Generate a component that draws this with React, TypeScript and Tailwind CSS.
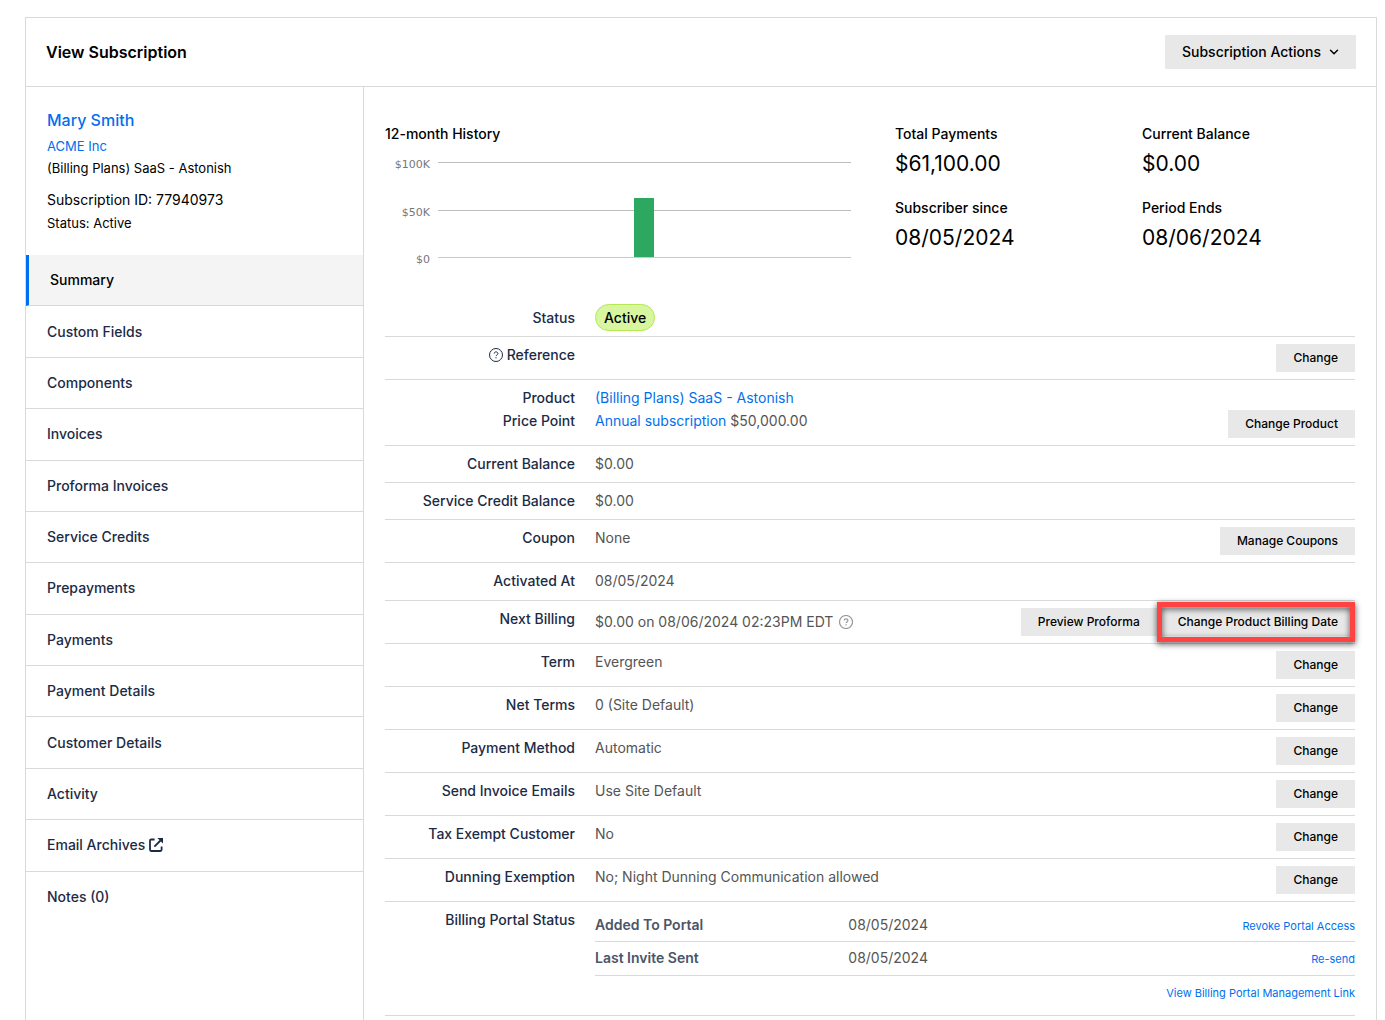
import type { ReactNode } from 'react'
import { ChevronDown } from 'lucide-react'

const navItems = [
  'Custom Fields',
  'Components',
  'Invoices',
  'Proforma Invoices',
  'Service Credits',
  'Prepayments',
  'Payments',
  'Payment Details',
  'Customer Details',
  'Activity',
  'Email Archives',
  'Notes (0)',
]

function HelpIcon({ className }: { className: string }) {
  return (
    <svg viewBox="0 0 14 14" className={className} fill="none" stroke="currentColor" strokeWidth="1" aria-hidden="true">
      <circle cx="7" cy="7" r="6.500" />
      <path d="M5.200 5.600c0-2.400 3.700-2.200 3.700 0 0 1.300-1.800 1.300-1.800 2.500" />
      <path d="M7 9.200v1.200" />
    </svg>
  )
}

function ExternalIcon() {
  return (
    <svg viewBox="0 0 14 14" className="size-3.5" fill="none" stroke="currentColor" strokeWidth="1.8" aria-hidden="true">
      <path d="M5.6 1.5H2.2C1.5 1.5 1 2 1 2.600V11.800C1 12.500 1.500 13 2.200 13H11.400C12.100 13 12.600 12.500 12.600 11.800V8.600" />
      <path d="M5.400 8.600L11.500 2.500" />
      <path d="M8.400 0H14V5.600Z" fill="currentColor" stroke="none" />
    </svg>
  )
}

function SmallButton({ children }: { children: ReactNode }) {
  return (
    <button type="button" className="h-7 bg-[#e8e8e8] px-[17px] text-xs font-medium whitespace-nowrap text-black">
      {children}
    </button>
  )
}

function Row({
  label,
  action,
  className = 'pb-[7px]',
  children,
}: {
  label: ReactNode
  action?: string
  className?: string
  children?: ReactNode
}) {
  return (
    <div className={`grid grid-cols-[190px_1fr] gap-x-5 border-b border-[#d9d9d9] pt-[7px] ${className}`}>
      <dt className="text-right font-medium text-[#1c2b45]">{label}</dt>
      <dd className="flex items-start justify-between text-[#555]">
        <span>{children}</span>
        {action && <SmallButton>{action}</SmallButton>}
      </dd>
    </div>
  )
}

function Stat({ label, value }: { label: string; value: string }) {
  return (
    <div>
      <dt className="font-medium">{label}</dt>
      <dd className="mt-1 text-[21px] leading-[30px]">{value}</dd>
    </div>
  )
}

function HistoryChart() {
  return (
    <svg viewBox="0 0 466 120" className="mt-1 w-[466px] max-w-full" role="img" aria-label="12-month History">
      <g fill="#777" fontSize="11" fontFamily="DejaVu Sans, sans-serif" textAnchor="end">
        <text x="45" y="19">$100K</text>
        <text x="45" y="67">$50K</text>
        <text x="45" y="114">$0</text>
      </g>
      <g fill="#bdbdbd">
        <rect x="53" y="13" width="413" height="1" />
        <rect x="53" y="61" width="413" height="1" />
      </g>
      <rect x="53" y="108" width="413" height="1" fill="#c0cbd2" />
      <rect x="249" y="49" width="20" height="59" fill="#2ca860" />
    </svg>
  )
}

export default function App() {
  return (
    <div className="flex min-h-screen flex-col bg-white pt-[17px] pr-2 pl-[25px] font-['Inter',sans-serif] text-sm leading-[22px] text-black">
      <div className="flex grow flex-col border border-b-0 border-[#d9d9d9]">
        <header className="flex items-center justify-between border-b border-[#d9d9d9] px-5 py-[17px]">
          <h1 className="text-base leading-[22px] font-semibold">View Subscription</h1>
          <button type="button" className="flex h-[34px] items-center gap-1.5 bg-[#e8e8e8] pr-[15px] pl-[17px] font-medium">
            Subscription Actions
            <ChevronDown className="size-3.5" strokeWidth={2.5} />
          </button>
        </header>

        <div className="flex grow">
          <aside className="w-[338px] shrink-0 border-r border-[#d9d9d9]">
            <div className="p-[21px]">
              <h2 className="text-base font-medium">
                <a href="#customer" className="text-[#006fee]">Mary Smith</a>
              </h2>
              <p className="mt-[3px] text-[13px]">
                <a href="#company" className="text-[#006fee]">ACME Inc</a>
              </p>
              <p className="text-[13px]">(Billing Plans) SaaS - Astonish</p>
              <p className="mt-2.5">Subscription ID: 77940973</p>
              <p className="mt-px text-[13px]">Status: Active</p>
            </div>
            <nav className="grid min-h-[668px] auto-rows-fr font-medium text-[#1c2b45]">
              <a href="#summary" className="flex items-center border-b border-l-3 border-b-[#d9d9d9] border-l-[#006fee] bg-[#f4f4f4] px-[21px] text-black">
                Summary
              </a>
              {navItems.map((item) => (
                <a key={item} href="#section" className="flex items-center gap-1 border-b border-[#d9d9d9] px-[21px] last:border-b-0">
                  {item}
                  {item === 'Email Archives' && <ExternalIcon />}
                </a>
              ))}
            </nav>
          </aside>

          <main className="min-w-0 grow px-[21px] pt-9">
            <section className="grid grid-cols-[510fr_460fr]">
              <div>
                <h3 className="font-medium">12-month History</h3>
                <HistoryChart />
              </div>
              <dl className="grid grid-cols-[247fr_213fr] content-start gap-y-[18px]">
                <Stat label="Total Payments" value="$61,100.00" />
                <Stat label="Current Balance" value="$0.00" />
                <Stat label="Subscriber since" value="08/05/2024" />
                <Stat label="Period Ends" value="08/06/2024" />
              </dl>
            </section>

            <dl className="mt-[31px]">
              <Row label="Status">
                <span className="-mt-[3px] -mb-0.5 block rounded-full border border-[#b5e853] bg-[#d8f5a0] px-2 pt-0.5 pb-px font-medium text-black">
                  Active
                </span>
              </Row>
              <Row
                label={
                  <span className="flex items-center justify-end gap-1">
                    <HelpIcon className="size-3.5" />
                    Reference
                  </span>
                }
                action="Change"
              />
              <div className="border-b border-[#d9d9d9] py-[7px]">
                <div className="grid grid-cols-[190px_1fr] gap-x-5">
                  <dt className="text-right font-medium text-[#1c2b45]">Product</dt>
                  <dd>
                    <a href="#product" className="text-[#006fee]">(Billing Plans) SaaS - Astonish</a>
                  </dd>
                </div>
                <div className="mt-px grid grid-cols-[190px_1fr] gap-x-5">
                  <dt className="text-right font-medium text-[#1c2b45]">Price Point</dt>
                  <dd className="flex items-start justify-between text-[#555]">
                    <span>
                      <a href="#price-point" className="text-[#006fee]">Annual subscription</a> $50,000.00
                    </span>
                    <SmallButton>Change Product</SmallButton>
                  </dd>
                </div>
              </div>
              <Row label="Current Balance">$0.00</Row>
              <Row label="Service Credit Balance">$0.00</Row>
              <Row label="Coupon" action="Manage Coupons">None</Row>
              <Row label="Activated At" className="pb-2">08/05/2024</Row>
              <div className="grid grid-cols-[190px_1fr] gap-x-5 border-b border-[#d9d9d9] py-[7px]">
                <dt className="text-right font-medium text-[#1c2b45]">Next Billing</dt>
                <dd className="flex items-center justify-between text-[#555]">
                  <span className="flex items-center gap-1.5">
                    $0.00 on 08/06/2024 02:23PM EDT
                    <HelpIcon className="size-3.5 stroke-[1.2] text-[#999]" />
                  </span>
                  <span className="flex gap-1">
                    <SmallButton>Preview Proforma</SmallButton>
                    <span className="relative flex">
                      <SmallButton>Change Product Billing Date</SmallButton>
                      <span className="pointer-events-none absolute -inset-y-1.5 right-0 -left-1 border-5 border-[#ff4242] drop-shadow-[0_2px_3px_rgba(0,0,0,0.7)]" />
                    </span>
                  </span>
                </dd>
              </div>
              <Row label="Term" action="Change">Evergreen</Row>
              <Row label="Net Terms" action="Change">0 (Site Default)</Row>
              <Row label="Payment Method" action="Change">Automatic</Row>
              <Row label="Send Invoice Emails" action="Change">Use Site Default</Row>
              <Row label="Tax Exempt Customer" action="Change">No</Row>
              <Row label="Dunning Exemption" action="Change">No; Night Dunning Communication allowed</Row>
              <div className="grid grid-cols-[190px_1fr] gap-x-5 border-b border-[#d9d9d9] pt-[7px] pb-[11px]">
                <dt className="text-right font-medium text-[#1c2b45]">Billing Portal Status</dt>
                <dd className="text-[#555]">
                  <table className="w-full">
                    <tbody className="align-top">
                      <tr className="border-b border-[#d9d9d9]">
                        <th scope="row" className="w-1/3 pt-[5px] text-left font-semibold text-[#4a5568]">Added To Portal</th>
                        <td className="pt-[5px]">08/05/2024</td>
                        <td className="pt-1.5 pb-1 text-right text-[11px]">
                          <a href="#revoke" className="text-[#006fee]">Revoke Portal Access</a>
                        </td>
                      </tr>
                      <tr className="border-b border-[#d9d9d9]">
                        <th scope="row" className="w-1/3 pt-[5px] text-left font-semibold text-[#4a5568]">Last Invite Sent</th>
                        <td className="pt-[5px]">08/05/2024</td>
                        <td className="pt-1.5 pb-[5px] text-right text-[11px]">
                          <a href="#resend" className="text-[#006fee]">Re-send</a>
                        </td>
                      </tr>
                    </tbody>
                  </table>
                  <p className="mt-1.5 text-right text-[11px]">
                    <a href="#portal-link" className="text-[#006fee]">View Billing Portal Management Link</a>
                  </p>
                </dd>
              </div>
            </dl>
          </main>
        </div>
      </div>
    </div>
  )
}
